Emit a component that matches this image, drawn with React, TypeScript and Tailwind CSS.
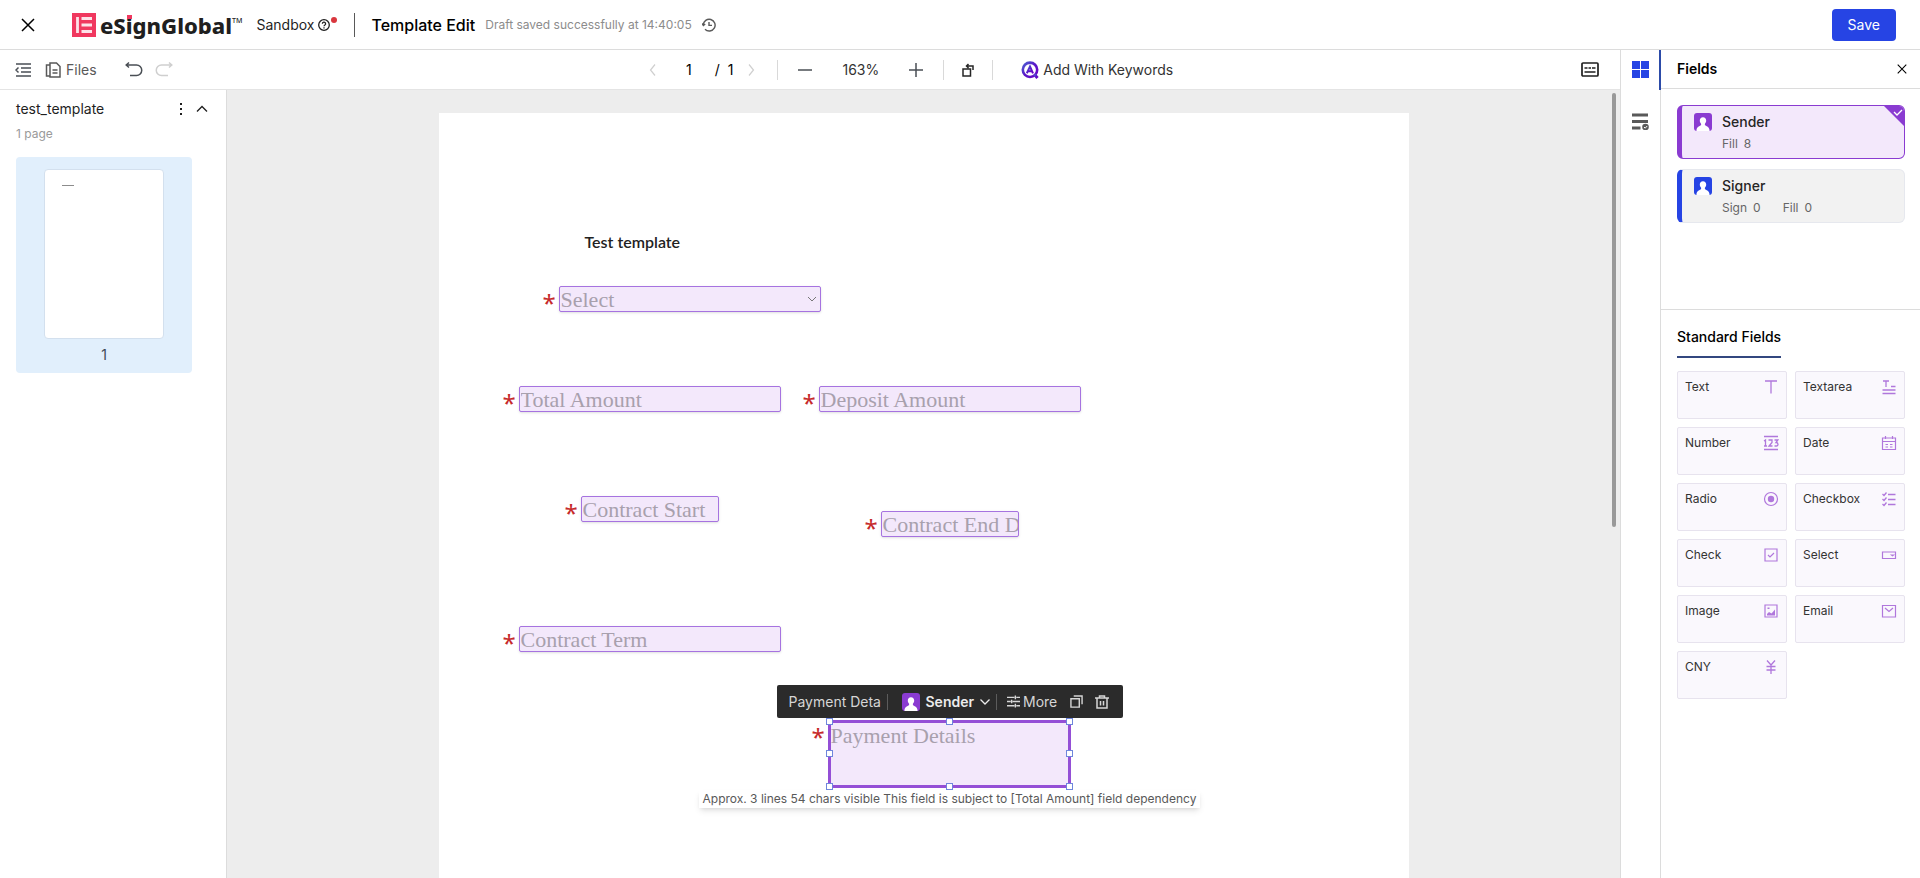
import React from 'react';
import { clsx } from 'clsx';

interface IconProps {
  className?: string;
  size?: number;
  strokeWidth?: number;
  box?: number;
  children?: React.ReactNode;
}

function Icon({
  className,
  size = 16,
  strokeWidth = 1.5,
  box = 16,
  children,
}: IconProps) {
  return (
    <svg
      className={clsx('shrink-0', className)}
      width={size}
      height={size}
      viewBox={`0 0 ${box} ${box}`}
      fill="none"
      stroke="currentColor"
      strokeWidth={strokeWidth}
      aria-hidden="true"
    >
      {children}
    </svg>
  );
}

function CloseIcon({ size = 14 }: { size?: number }) {
  return (
    <Icon size={size} box={14}>
      <path d="M1 1l12 12M13 1L1 13" />
    </Icon>
  );
}

function UserBadge({ className }: { className?: string }) {
  return (
    <svg
      className={clsx('shrink-0', className)}
      width="18"
      height="18"
      viewBox="0 0 18 18"
      aria-hidden="true"
    >
      <rect width="18" height="18" rx="3" fill="currentColor" />
      <path
        d="M9 4.2c2 0 3.2 1.4 3.2 3.4 0 1.4-.5 2.5-1.3 3.1v1.2c0 .8 4.6 1.3 4.6 5.3v.8h-13v-.8c0-4 4.6-4.5 4.6-5.3v-1.2C6.3 10.100 5.800 9 5.800 7.600c0-2 1.200-3.400 3.200-3.400z"
        fill="#fff"
      />
    </svg>
  );
}

function Logo() {
  return (
    <div className="flex items-center gap-1">
      <svg width="24" height="24" viewBox="0 0 24 24" aria-hidden="true">
        <rect width="24" height="24" fill="#f0385f" />
        <path
          d="M5.500 4v16M9.500 5.500H20M9.500 12H20M9.500 18.500H20"
          stroke="#fde3e9"
          strokeWidth="2.800"
        />
      </svg>
      <div className="flex font-['Noto_Sans'] text-[22px] leading-6 font-extrabold text-[#1f1f1f]">
        <span>
          eS
          <span className="relative">
            i
            <span className="absolute top-[5px] left-px h-1 w-[5px] bg-[#f0385f]" />
          </span>
          gnGlobal
        </span>
        <sup className="top-1 text-[7px] leading-2 font-medium">TM</sup>
      </div>
    </div>
  );
}

function Header() {
  return (
    <header className="flex h-[50px] shrink-0 items-center border-b border-[#dcdcdc] pr-6 pl-[21px]">
      <button aria-label="Close" className="mr-[37px]">
        <CloseIcon />
      </button>
      <Logo />
      <span className="ml-3.5 text-sm text-[#1f1f1f]">Sandbox</span>
      <button aria-label="Help" className="relative ml-1 text-[#1f1f1f]">
        <Icon size={12} box={12} strokeWidth={1.3}>
          <circle cx="6" cy="6" r="5.300" />
          <path d="M4.400 4.800a1.600 1.600 0 1 1 2.300 1.400c-.5.300-.7.500-.7 1M6 8.200v1.200" />
        </Icon>
        <span className="absolute -top-0.5 -right-[7px] size-1.5 rounded-full bg-[#d9363e]" />
      </button>
      <span className="ml-6 h-6 w-px bg-[#595959]" />
      <h1 className="ml-4 text-base font-medium text-black">Template Edit</h1>
      <span className="ml-2.5 text-xs text-[#8c8c8c]">
        Draft saved successfully at 14:40:05
      </span>
      <button aria-label="History" className="ml-2.5 text-[#595959]">
        <Icon size={14} box={14} strokeWidth={1.4}>
          <path d="M1.300 7A5.900 5.900 0 1 1 3 11.300M7 4v3.400h3" />
          <path d="M0 5.500L1.400 7.500 3.200 6" />
        </Icon>
      </button>
      <button className="ml-auto h-8 rounded bg-[#2644e4] px-4 text-sm text-white">
        Save
      </button>
    </header>
  );
}

function Divider() {
  return <span className="h-5 w-px shrink-0 bg-[#d9d9d9]" />;
}

function Toolbar() {
  return (
    <div className="flex h-10 shrink-0 items-center border-b border-[#e4e4e4] text-[#4a4f55]">
      <div className="flex w-[227px] shrink-0 items-center pl-[15px]">
        <button aria-label="Collapse pages">
          <Icon>
            <path d="M1 2h15M6 6h10M6 10h10M1 14h15M3.500 5.500L1 8l2.500 2.500" />
          </Icon>
        </button>
        <button className="ml-3.5 flex items-center gap-[5px] text-sm text-[#595959]">
          <Icon>
            <path d="M5 1h6.500L15 4.500V15H5zM5 3H1.500v11H5M7.500 8h5M7.500 11h5" />
          </Icon>
          Files
        </button>
        <button aria-label="Undo" className="ml-7">
          <Icon size={18} box={18}>
            <path d="M4 1.500L1.200 4 4 6.500M1.200 4h10.300a5 5 0 0 1 0 10.500H5" />
          </Icon>
        </button>
        <button aria-label="Redo" className="ml-3 text-[#cfcfcf]">
          <Icon size={18} box={18}>
            <path d="M14 1.500L16.800 4 14 6.500M16.800 4H6.500a5 5 0 0 0 0 10.500H13" />
          </Icon>
        </button>
      </div>
      <div className="flex flex-1 items-center justify-center pl-3 text-sm">
        <button aria-label="Previous page" className="text-[#cfcfcf]">
          <Icon size={12} box={12} strokeWidth={1.2}>
            <path d="M8 .5L3.500 6 8 11.500" />
          </Icon>
        </button>
        <input
          aria-label="Page"
          defaultValue="1"
          className="ml-3.5 w-8 text-center text-black"
        />
        <span className="ml-2.5 text-black">/&nbsp; 1</span>
        <button aria-label="Next page" className="ml-3 text-[#cfcfcf]">
          <Icon size={12} box={12} strokeWidth={1.2}>
            <path d="M4 .5L8.500 6 4 11.500" />
          </Icon>
        </button>
        <span className="w-5" />
        <Divider />
        <button aria-label="Zoom out" className="ml-5">
          <Icon size={14} box={14}>
            <path d="M0 7h14" />
          </Icon>
        </button>
        <span className="mx-[30px] text-[#333]">163%</span>
        <button aria-label="Zoom in" className="mr-5">
          <Icon size={14} box={14}>
            <path d="M0 7h14M7 0v14" />
          </Icon>
        </button>
        <Divider />
        <button aria-label="Rotate" className="mx-[17px] text-[#262626]">
          <Icon size={14} box={14}>
            <path d="M2 6h7.500v7H2zM5.500 3H12v4M7.500 1l-2 2 2 2" />
          </Icon>
        </button>
        <Divider />
        <button className="ml-7 flex items-center gap-1 text-[#333]">
          <svg width="18" height="18" viewBox="0 0 18 18" aria-hidden="true">
            <defs>
              <linearGradient id="keyword" x1="0" y1="0" x2="1" y2="1">
                <stop offset="0" stopColor="#4b5fd0" />
                <stop offset=".5" stopColor="#5a16c8" />
                <stop offset="1" stopColor="#6a00c4" />
              </linearGradient>
            </defs>
            <g fill="none" stroke="url(#keyword)">
              <circle cx="9" cy="8.800" r="7.200" strokeWidth="2.600" />
              <path d="M13.500 13.500l3 3.500" strokeWidth="3" />
              <path d="M5.800 12.300L9 5.500l3 6.800M7 10.200h4" strokeWidth="2" />
            </g>
          </svg>
          Add With Keywords
        </button>
      </div>
      <button aria-label="Shortcuts" className="mr-[21px] text-[#1f1f1f]">
        <Icon size={18} box={18} strokeWidth={1.7}>
          <rect x="1" y="2" width="16" height="13" rx="1" />
          <path d="M3.500 7h3M7.500 7h2.500M11 7h3.500M3.500 11h11" />
        </Icon>
      </button>
    </div>
  );
}

function PagesSidebar() {
  return (
    <aside className="w-[227px] shrink-0 border-r border-[#dcdcdc] pt-[9px] pl-4">
      <div className="flex items-center pr-[18px] text-[#1f1f1f]">
        <h2 className="flex-1 text-sm">test_template</h2>
        <button aria-label="File menu" className="mr-[9px]">
          <Icon size={12} box={12}>
            <path d="M6 0v2M6 5v2M6 10v2" strokeWidth="2" />
          </Icon>
        </button>
        <button aria-label="Collapse file">
          <Icon size={12} box={12} strokeWidth={1.3}>
            <path d="M1 8.500l5-5 5 5" />
          </Icon>
        </button>
      </div>
      <p className="mt-1.5 text-xs leading-[18px] text-[#9a9a9a]">1 page</p>
      <button className="mt-3.5 flex w-44 flex-col items-center rounded-sm bg-[#e1effc] pt-3 pb-2 text-sm text-[#404a55]">
        <span className="h-[170px] w-[120px] rounded border border-[#d3e0ee] bg-white pt-[15px] pl-[17px]">
          <span className="block h-px w-3 bg-[#8c8c8c]" />
        </span>
        <span className="mt-1.5 leading-5">1</span>
      </button>
    </aside>
  );
}

const textFields = [
  { label: 'Total Amount', place: 'top-[273px] left-[80px]', width: 'w-[262px]' },
  { label: 'Deposit Amount', place: 'top-[273px] left-[380px]', width: 'w-[262px]' },
  { label: 'Contract Start', place: 'top-[383px] left-[142px]', width: 'w-[138px]' },
  { label: 'Contract End D', place: 'top-[398px] left-[442px]', width: 'w-[138px]' },
  { label: 'Contract Term', place: 'top-[513px] left-[80px]', width: 'w-[262px]' },
];

function Required() {
  return (
    <span className="absolute top-px -left-4 font-['Noto_Sans'] text-2xl leading-8 text-[#c62b2b]">
      *
    </span>
  );
}

const fieldStyle =
  "block h-[26px] rounded-xs border border-[#a673e0] bg-[#f3e8fb] pt-0.5 pl-px font-['Liberation_Serif'] text-[22px] leading-[22px] shadow-sm";

const handles = [
  '-top-0.5 -left-0.5',
  '-top-0.5 left-[118px]',
  '-top-0.5 -right-0.5',
  'top-[30px] -left-0.5',
  'top-[30px] -right-0.5',
  '-bottom-0.5 -left-0.5',
  '-bottom-0.5 left-[118px]',
  '-bottom-0.5 -right-0.5',
];

function FieldToolbar() {
  return (
    <div className="absolute top-[572px] left-[338px] flex h-[33px] w-[346px] items-center rounded-xs bg-[#2b2b2b] pr-3.5 pl-3 text-sm text-[#d6d6d6]">
      <input
        aria-label="Field name"
        defaultValue="Payment Deta"
        className="w-24 min-w-0"
      />
      <span className="ml-0.5 h-4 w-px bg-[#5c5c5c]" />
      <button className="ml-3.5 flex items-center font-semibold text-[#ececec]">
        <UserBadge className="text-[#8a3bd1]" />
        <span className="ml-1.5">Sender</span>
        <Icon size={10} box={10} strokeWidth={1.3} className="ml-1.5">
          <path d="M.5 2.500L5 7l4.500-4.500" />
        </Icon>
      </button>
      <span className="ml-1.5 h-4 w-px bg-[#5c5c5c]" />
      <button className="ml-2.5 flex items-center gap-[3px]">
        <Icon size={13} box={14}>
          <path d="M0 2.500h8M10 2.500h4M0 7h4M6 7h8M0 11.500h8M10 11.500h4M9 .5v4M5 5v4M9 9.500v4" />
        </Icon>
        More
      </button>
      <button aria-label="Copy" className="ml-auto">
        <Icon size={13} box={14}>
          <path d="M1 4h9v9H1zM4 1h9v9" />
        </Icon>
      </button>
      <button aria-label="Delete" className="ml-3">
        <Icon size={14} box={14}>
          <path d="M0 3h14M4.500 3V1h5v2M2 3v10h10V3M5.500 6v4.500M8.500 6v4.500" />
        </Icon>
      </button>
    </div>
  );
}

function Canvas() {
  return (
    <main className="relative flex-1 overflow-hidden bg-[#ededed] pt-[23px]">
      {/* Document page */}
      <div className="relative mx-auto h-[1372px] w-[970px] bg-white">
        <p className="absolute top-[117px] left-[146px] font-['Lato'] text-base leading-6 font-semibold text-[#222]">
          Test template
        </p>
        <label className="absolute top-[173px] left-[120px]">
          <Required />
          <select
            aria-label="Select"
            className={clsx(fieldStyle, 'w-[262px] appearance-none text-[#a8a0ad]')}
          >
            <option>Select</option>
          </select>
          <Icon
            size={10}
            box={10}
            strokeWidth={1}
            className="absolute top-2 right-1 text-[#777]"
          >
            <path d="M1 3l4 4 4-4" />
          </Icon>
        </label>
        {textFields.map((field) => (
          <label key={field.label} className={clsx('absolute', field.place)}>
            <Required />
            <input
              aria-label={field.label}
              placeholder={field.label}
              className={clsx(
                fieldStyle,
                field.width,
                'placeholder:text-[#a8a0ad]',
              )}
            />
          </label>
        ))}
        {/* Selected field */}
        <label className="absolute top-[607px] left-[389px]">
          <Required />
          <textarea
            aria-label="Payment Details"
            placeholder="Payment Details"
            className="block h-[68px] w-[243px] resize-none border-3 border-[#944fd6] bg-[#f3e8fb] font-['Liberation_Serif'] text-[22px] leading-[26px] placeholder:text-[#a8a0ad]"
          />
          {handles.map((place) => (
            <span
              key={place}
              className={clsx(
                'absolute size-[7px] border border-[#6f86dc] bg-white',
                place,
              )}
            />
          ))}
        </label>
        <FieldToolbar />
        <p className="absolute top-[677px] left-[260px] bg-white px-1 text-xs leading-[18px] whitespace-nowrap text-[#595959] shadow-md">
          Approx. 3 lines 54 chars visible This field is subject to [Total
          Amount] field dependency
        </p>
      </div>
      <span className="absolute top-[3px] right-1 h-[434px] w-1 rounded-full bg-[#999]" />
    </main>
  );
}

const fieldTypes = [
  { title: 'Text', icon: <path d="M2 2h12M8 2v12.500" /> },
  {
    title: 'Textarea',
    icon: (
      <path d="M2 2h6M5 2v6M10 7.500h4.500M1.500 11h13M1.500 14.500h13" />
    ),
  },
  {
    title: 'Number',
    icon: (
      <>
        <path d="M1 1.500h14M1 14.500h14" />
        <path d="M1 6l1.500-1v6M1 11h3M5.500 5H9v2.500L6 11h3.500M11.500 5h3.300L13 7.500c2.600 0 2.600 3.500.3 3.500h-1.800" />
      </>
    ),
  },
  {
    title: 'Date',
    icon: (
      <path
        strokeWidth="1.200"
        d="M1.500 3h13v11.500h-13zM1.500 6.500h13M4.500 1v3M11.500 1v3M4.500 9.500H7M9 9.500h2.500M4.500 12H7M9 12h2.500"
      />
    ),
  },
  {
    title: 'Radio',
    icon: (
      <>
        <circle cx="8" cy="8" r="6.500" strokeWidth="1.200" />
        <circle cx="8" cy="8" r="3.200" fill="currentColor" stroke="none" />
      </>
    ),
  },
  {
    title: 'Checkbox',
    icon: (
      <path
        strokeWidth="1.300"
        d="M7 3.500h7.500M7 8.500h7.500M7 13.500h7.500M1.500 3L3 4.500 5.500 1.500M1.500 8L3 9.500l2.500-3M1.500 13L3 14.500l2.500-3"
      />
    ),
  },
  {
    title: 'Check',
    icon: (
      <path strokeWidth="1.200" d="M2 2h12v12H2zM5 8l2 2 4-4" />
    ),
  },
  {
    title: 'Select',
    icon: (
      <path strokeWidth="1.200" d="M1.500 5h13v6.500h-13zM10.500 8h2l-1 .8z" />
    ),
  },
  {
    title: 'Image',
    icon: (
      <>
        <path strokeWidth="1.200" d="M2 2h12v12H2z" />
        <path
          fill="currentColor"
          stroke="none"
          d="M4 12.500V11l2-2 2.500 1.500L12 6.500v6zM4.500 4.500h2v1.500h-2z"
        />
      </>
    ),
  },
  {
    title: 'Email',
    icon: (
      <path strokeWidth="1.200" d="M1.500 2.500h13v11.500h-13zM4 5l4 3.500L12 5" />
    ),
  },
  {
    title: 'CNY',
    icon: <path d="M4 1.500L8 6l4-4.500M8 6v9M3.500 7.500h9M3.500 11h9" />,
  },
];

function Rail() {
  return (
    <nav className="relative flex w-10 shrink-0 flex-col items-center border-l border-[#dcdcdc] pt-[11px]">
      <button aria-label="Fields" className="text-[#2644e4]">
        <svg width="17" height="17" viewBox="0 0 17 17" fill="currentColor">
          <path d="M0 0h8v8H0zM9 0h8v8H9zM0 9h8v8H0zM9 9h8v8H9z" />
        </svg>
      </button>
      <button aria-label="Properties" className="mt-[35px] text-[#595959]">
        <Icon size={17} box={17} strokeWidth={3}>
          <path d="M0 2h16M0 8.500h16M0 15h8.500" />
          <circle cx="13.500" cy="14" r="3.300" fill="currentColor" stroke="none" />
          <path d="M12 14l1.200 1.200L15.200 13" stroke="#fff" strokeWidth="1" />
        </Icon>
      </button>
      <span className="absolute top-0 -right-px h-10 w-0.5 bg-[#2c4ba8]" />
    </nav>
  );
}

function FieldsPanel() {
  return (
    <aside className="w-[260px] shrink-0 border-l border-[#dcdcdc]">
      <div className="flex h-[39px] items-center justify-between border-b border-[#dcdcdc] pr-[13px] pl-4">
        <h2 className="text-sm font-semibold text-black">Fields</h2>
        <button aria-label="Close fields">
          <CloseIcon size={10} />
        </button>
      </div>
      <div className="flex h-[221px] flex-col gap-2.5 border-b border-[#dcdcdc] py-4 pr-[15px] pl-4">
        <button className="relative flex h-[54px] overflow-hidden rounded-md border border-l-5 border-[#8a3bd1] bg-[#f3e8fb] pt-1.5 pl-3 text-left">
          <UserBadge className="mt-px text-[#8a3bd1]" />
          <span className="ml-2.5 text-xs text-[#666]">
            <span className="mb-1 block text-sm leading-5 font-medium text-[#262626]">
              Sender
            </span>
            <span className="flex gap-1.5">
              <span>Fill</span>
              <span>8</span>
            </span>
          </span>
          <svg
            className="absolute top-0 right-0"
            width="20"
            height="20"
            viewBox="0 0 20 20"
            aria-hidden="true"
          >
            <path d="M0 0h20v20z" fill="#8a3bd1" />
            <path d="M10 6l3 3 5-5" fill="none" stroke="#fff" strokeWidth="1.300" />
          </svg>
        </button>
        <button className="flex h-[54px] rounded-md border border-l-5 border-[#e6e8ee] border-l-[#2644e4] bg-[#f2f2f2] pt-1.5 pl-3 text-left">
          <UserBadge className="mt-px text-[#2644e4]" />
          <span className="ml-2.5 text-xs text-[#666]">
            <span className="mb-1 block text-sm leading-5 font-medium text-[#262626]">
              Signer
            </span>
            <span className="flex gap-1.5">
              <span>Sign</span>
              <span>0</span>
              <span className="ml-4">Fill</span>
              <span>0</span>
            </span>
          </span>
        </button>
      </div>
      <div className="pt-3.5 pr-[15px] pl-4">
        <h3 className="inline-block border-b-2 border-[#33477f] pb-2 text-sm leading-[22px] font-medium text-black">
          Standard Fields
        </h3>
        <div className="mt-[13px] grid grid-cols-2 gap-2">
          {fieldTypes.map((field) => (
            <button
              key={field.title}
              className="flex h-12 items-start justify-between rounded-xs border border-[#e7e3ee] bg-[#faf8fd] px-[7px] pt-[7px] text-xs leading-4 text-[#333]"
            >
              {field.title}
              <Icon strokeWidth={1.3} className="text-[#b077dc]">
                {field.icon}
              </Icon>
            </button>
          ))}
        </div>
      </div>
    </aside>
  );
}

function App() {
  return (
    <div className="flex h-screen flex-col overflow-hidden bg-white font-['Inter',sans-serif]">
      <Header />
      <div className="flex min-h-0 flex-1">
        <div className="flex min-w-0 flex-1 flex-col">
          <Toolbar />
          <div className="flex min-h-0 flex-1">
            <PagesSidebar />
            <Canvas />
          </div>
        </div>
        <Rail />
        <FieldsPanel />
      </div>
    </div>
  );
}

export default App;
